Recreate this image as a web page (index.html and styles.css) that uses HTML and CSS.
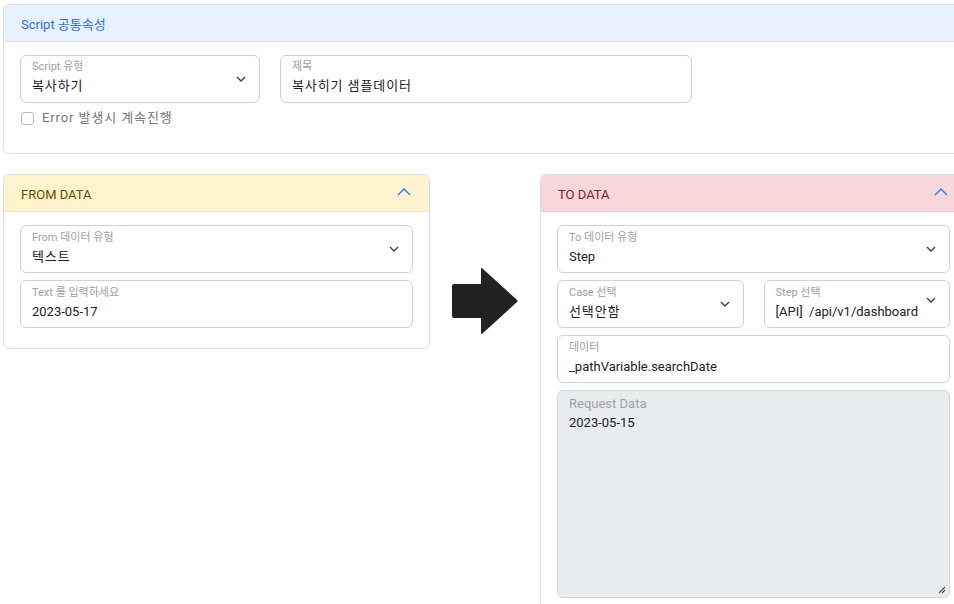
FILE: index.html
```html
<!DOCTYPE html>
<html lang="ko">
<head>
<meta charset="utf-8">
<title>Script</title>
<link rel="stylesheet" href="styles.css">
</head>
<body>
<div class="page">
  <section class="card common">
    <div class="card-header hdr-blue">Script 공통속성</div>
    <div class="card-body common-body">
      <div class="row-top">
        <div class="field w-type">
          <span class="flabel">Script 유형</span>
          <span class="fvalue ko">복사하기</span>
          <svg class="chev" viewBox="0 0 10 6" width="10" height="6"><path d="M1 1l4 4 4-4" fill="none" stroke="#343a40" stroke-width="1.3"/></svg>
        </div>
        <div class="field w-title">
          <span class="flabel">제목</span>
          <span class="fvalue ko">복사히기 샘플데이터</span>
        </div>
      </div>
      <label class="check"><span class="box"></span><span class="ko">Error 발생시 계속진행</span></label>
    </div>
  </section>

  <div class="lower">
    <section class="card from">
      <div class="card-header hdr-yellow">
        <span>FROM DATA</span>
        <svg class="up" viewBox="0 0 14 8" width="14" height="8"><path d="M1 7l6-6 6 6" fill="none" stroke="#2b72ff" stroke-width="1.3"/></svg>
      </div>
      <div class="card-body stack">
        <div class="field">
          <span class="flabel">From 데이터 유형</span>
          <span class="fvalue ko">텍스트</span>
          <svg class="chev" viewBox="0 0 10 6" width="10" height="6"><path d="M1 1l4 4 4-4" fill="none" stroke="#343a40" stroke-width="1.3"/></svg>
        </div>
        <div class="field">
          <span class="flabel">Text 를 입력하세요</span>
          <span class="fvalue">2023-05-17</span>
        </div>
      </div>
    </section>

    <div class="arrow-col">
      <svg class="arrow" viewBox="0 0 68 68" width="68" height="68"><path d="M3 17H30V2.5Q30 0 32 2L66 33Q67 34 66 35L32 66Q30 68 30 65.5V51H3Q1 51 1 49V19Q1 17 3 17Z" fill="#222"/></svg>
    </div>

    <section class="card to">
      <div class="card-header hdr-red">
        <span>TO DATA</span>
        <svg class="up" viewBox="0 0 14 8" width="14" height="8"><path d="M1 7l6-6 6 6" fill="none" stroke="#2b72ff" stroke-width="1.3"/></svg>
      </div>
      <div class="card-body stack">
        <div class="field">
          <span class="flabel">To 데이터 유형</span>
          <span class="fvalue">Step</span>
          <svg class="chev" viewBox="0 0 10 6" width="10" height="6"><path d="M1 1l4 4 4-4" fill="none" stroke="#343a40" stroke-width="1.3"/></svg>
        </div>
        <div class="pair">
          <div class="field">
            <span class="flabel">Case 선택</span>
            <span class="fvalue ko">선택안함</span>
            <svg class="chev" viewBox="0 0 10 6" width="10" height="6"><path d="M1 1l4 4 4-4" fill="none" stroke="#343a40" stroke-width="1.3"/></svg>
          </div>
          <div class="field">
            <span class="flabel">Step 선택</span>
            <span class="fvalue">[API]&nbsp; /api/v1/dashboard</span>
            <svg class="chev chev-hi" viewBox="0 0 10 6" width="10" height="6"><path d="M1 1l4 4 4-4" fill="none" stroke="#343a40" stroke-width="1.3"/></svg>
          </div>
        </div>
        <div class="field">
          <span class="flabel">데이터</span>
          <span class="fvalue">_pathVariable.searchDate</span>
        </div>
        <div class="field area">
          <span class="alabel">Request Data</span>
          <span class="avalue">2023-05-15</span>
          <svg class="grip" viewBox="0 0 8 8" width="8" height="8"><path d="M1 7L7 1M4 7L7 4" stroke="#555" stroke-width="1.2"/></svg>
        </div>
      </div>
    </section>
  </div>
</div>
</body>
</html>
```

FILE: styles.css
```css
* { box-sizing: border-box; }
html, body { margin: 0; padding: 0; background: #fff; }
body {
  overflow: hidden;
  font-family: Roboto, "Noto Sans CJK KR", sans-serif;
  color: #212529;
  font-size: 13px;
}
.page {
  width: 966px;
  padding: 4px 0 0 3px;
}
.ko { letter-spacing: 0.9px; }
.card {
  border: 1px solid #dcdfe2;
  border-radius: 6px;
  background: #fff;
}
.card-header {
  height: 37px;
  padding: 0 16px 0 17px;
  display: flex;
  align-items: center;
  justify-content: space-between;
  font-size: 13px;
  border-bottom: 1px solid #dcdfe2;
  border-radius: 5px 5px 0 0;
}
.hdr-blue { background: #e7f1ff; color: #2f6fee; }
.hdr-yellow { background: #fff3cd; color: #664d03; border-bottom-color: #f3e7c0; padding-top: 3px; }
.hdr-red { background: #f8d7da; color: #842029; border-bottom-color: #efcdd0; padding-top: 3px; }
.up { margin-right: 2px; margin-top: -5px; }

.common-body { padding: 13px 16px 0 16px; height: 111px; }
.row-top { display: flex; gap: 20px; }
.w-type { width: 240px; }
.w-title { width: 412px; }

.field {
  position: relative;
  height: 48px;
  border: 1px solid #cfd3d8;
  border-radius: 6px;
  padding: 3px 11px 0 11px;
  display: flex;
  flex-direction: column;
  background: #fff;
}
.stack .field { padding-top: 4px; }
.flabel {
  font-size: 11px;
  line-height: 16px;
  color: #9b9fa4;
}
.fvalue {
  font-size: 13px;
  line-height: 20px;
  margin-top: 1px;
  color: #1d2125;
  white-space: nowrap;
}
.chev { position: absolute; right: 13px; top: 20px; }
.chev-hi { top: 16px; }

.check {
  display: flex;
  align-items: center;
  gap: 8px;
  margin-top: 7px;
  color: #70757a;
  font-size: 13px;
  line-height: 16px;
}
.box {
  width: 13px;
  height: 13px;
  border: 1px solid #b4b9be;
  border-radius: 3px;
  margin-left: 1px;
}

.lower {
  display: flex;
  align-items: flex-start;
  margin-top: 20px;
}
.from, .to { width: 427px; flex: none; }
.stack {
  display: flex;
  flex-direction: column;
  gap: 7px;
  padding: 13px 16px 20px 16px;
}
.pair { display: flex; gap: 20px; }
.pair .field { flex: 1; }

.arrow-col {
  width: 110px;
  flex: none;
  display: flex;
  justify-content: center;
  padding-top: 93px;
  padding-right: 1px;
}

.stack .area {
  height: 208px;
  background: #e9ecef;
  border-color: #d3d7db;
  padding-top: 3px;
}
.alabel { font-size: 13px; line-height: 20px; color: #9ca1a6; }
.avalue { font-size: 13px; line-height: 18px; color: #1d2125; }
.grip { position: absolute; right: 3px; bottom: 3px; }
```
